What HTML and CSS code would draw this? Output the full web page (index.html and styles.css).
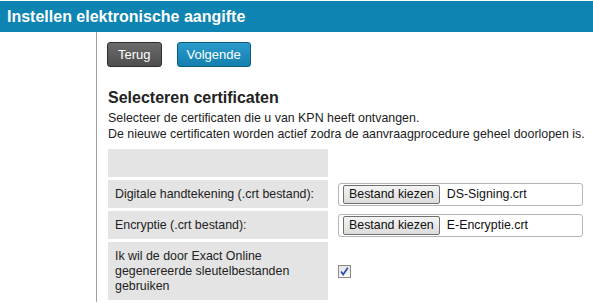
FILE: index.html
```html
<!DOCTYPE html>
<html lang="nl">
<head>
    <meta charset="UTF-8">
    <title>Instellen elektronische aangifte</title>
    <link rel="stylesheet" href="styles.css">
</head>
<body>
    <div class="header">
        <h1>Instellen elektronische aangifte</h1>
    </div>

    <div class="page">
        <div class="sidebar"></div>

        <div class="content">
            <div class="buttons">
                <span class="btn btn-back">Terug</span>
                <span class="btn btn-next">Volgende</span>
            </div>

            <h2>Selecteren certificaten</h2>
            <p class="intro">Selecteer de certificaten die u van KPN heeft ontvangen.<br>
            De nieuwe certificaten worden actief zodra de aanvraagprocedure geheel doorlopen is.</p>

            <div class="form-grid">
                <div class="label empty"></div>
                <div class="field"></div>

                <div class="label">Digitale handtekening (.crt bestand):</div>
                <div class="field">
                    <div class="file-input">
                        <span class="file-btn">Bestand kiezen</span>
                        <span class="file-name">DS-Signing.crt</span>
                    </div>
                </div>

                <div class="label">Encryptie (.crt bestand):</div>
                <div class="field">
                    <div class="file-input">
                        <span class="file-btn">Bestand kiezen</span>
                        <span class="file-name">E-Encryptie.crt</span>
                    </div>
                </div>

                <div class="label tall">Ik wil de door Exact Online gegenereerde sleutelbestanden gebruiken</div>
                <div class="field">
                    <span class="checkbox">
                        <svg width="11" height="11" viewBox="0 0 11 11">
                            <path d="M2 5.5 L4.2 8.5 L8.8 1.8" fill="none" stroke="#2f4fb0" stroke-width="1.8"/>
                        </svg>
                    </span>
                </div>
            </div>
        </div>
    </div>
</body>
</html>
```

FILE: styles.css
```css
body {
    margin: 0;
    padding-top: 1px;
    font-family: "Liberation Sans", Arial, sans-serif;
    font-size: 12.4px;
    color: #222;
    background: #fff;
}
.header {
    background: #0d84b2;
    height: 31px;
    display: flex;
    align-items: center;
}
.header h1 {
    margin: 0 0 0 7px;
    color: #fff;
    font-size: 16px;
    font-weight: bold;
}
.page {
    display: flex;
    min-height: 270px;
}
.sidebar {
    width: 96px;
    border-right: 1px solid #a0a0a0;
    flex-shrink: 0;
}
.content {
    padding: 10px 0 0 10px;
}
.buttons {
    display: flex;
    gap: 15px;
}
.btn {
    display: inline-block;
    height: 23px;
    line-height: 23px;
    border-radius: 3px;
    color: #fff;
    font-size: 13px;
}
.btn-back {
    background: linear-gradient(#6b6b6b, #4e4e4e);
    border: 1px solid #2e2e2e;
    padding: 0 10px;
}
.btn-next {
    background: linear-gradient(#2a9bcc, #137fae);
    border: 1px solid #0c5a7c;
    padding: 0 9px;
}
h2 {
    margin: 22px 0 0 1px;
    font-size: 16px;
    font-weight: bold;
    color: #222;
}
.intro {
    margin: 3px 0 0 1px;
    line-height: 16px;
}
.form-grid {
    display: grid;
    grid-template-columns: 220px auto;
    column-gap: 10px;
    row-gap: 3px;
    margin: 7px 0 0 1px;
}
.label {
    background: #e4e4e4;
    height: 28px;
    padding: 0 7px;
    display: flex;
    align-items: center;
    line-height: 15px;
}
.label.tall {
    padding: 7px 7px 6px;
    height: 45px;
}
.field {
    display: flex;
    align-items: center;
}
.file-input {
    width: 245px;
    height: 23px;
    border: 1px solid #b5b5b5;
    border-radius: 3px;
    display: flex;
    align-items: center;
    padding-left: 4px;
    box-sizing: border-box;
}
.file-btn {
    height: 17px;
    line-height: 17px;
    padding: 0 5px;
    border: 1px solid #707070;
    border-radius: 2px;
    background: linear-gradient(#f4f4f4, #dcdcdc);
    color: #111;
}
.file-name {
    margin-left: 7px;
    color: #111;
}
.checkbox {
    width: 11px;
    height: 11px;
    border: 1px solid #8a8a8a;
    background: linear-gradient(#e6e6e6, #f8f8f8);
    display: inline-block;
}
.checkbox svg {
    display: block;
}
```
